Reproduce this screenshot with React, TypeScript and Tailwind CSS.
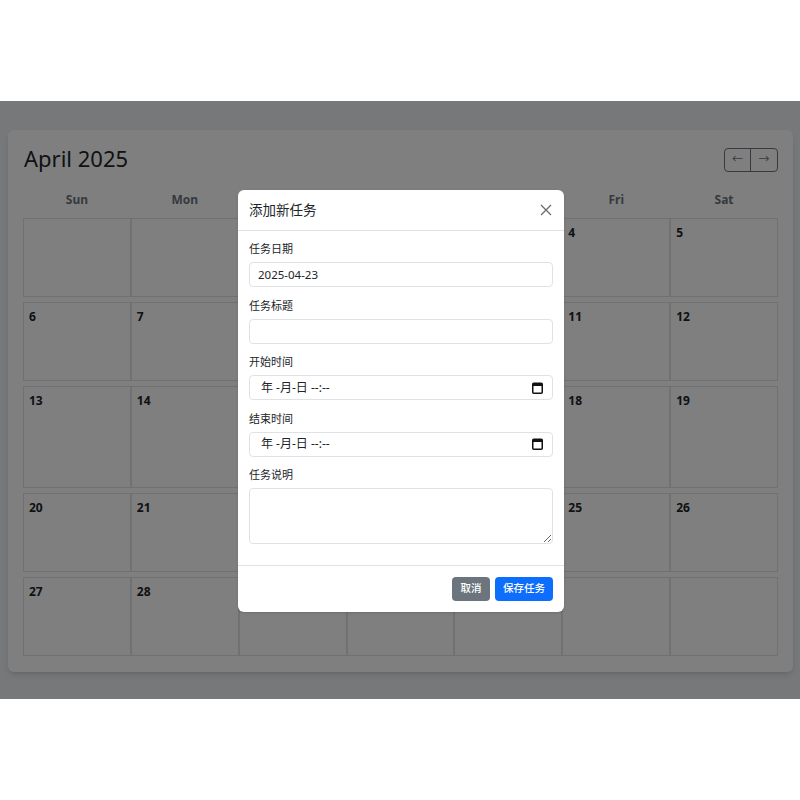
import React from "react";

const FONT = { fontFamily: '"Noto Sans", "Noto Sans CJK SC", sans-serif' };

const weekdays = ["Sun", "Mon", "Tue", "Wed", "Thu", "Fri", "Sat"];

// April 2025 starts on a Tuesday
const cells: (number | null)[] = [
  null, null, 1, 2, 3, 4, 5,
  6, 7, 8, 9, 10, 11, 12,
  13, 14, 15, 16, 17, 18, 19,
  20, 21, 22, 23, 24, 25, 26,
  27, 28, 29, 30, null, null, null,
];

function CalendarIcon() {
  return (
    <svg width="11" height="12" viewBox="0 0 11 12" fill="none">
      <rect x="0.75" y="1.25" width="9.5" height="10" rx="1" stroke="#111" strokeWidth="1.5" />
      <rect x="0.75" y="1.25" width="9.5" height="2.75" fill="#111" />
    </svg>
  );
}

function Field({ label, children }: { label: string; children: React.ReactNode }) {
  return (
    <div className="mb-[10.5px]">
      <div className="h-[16px] mb-[5px] text-[11px] leading-[16px] text-[#212529]">{label}</div>
      {children}
    </div>
  );
}

function DateTimeBox() {
  return (
    <div className="h-[25px] rounded-[4px] border border-[#dee2e6] bg-white flex items-center justify-between pl-[11px] pr-[9px] text-[12px] text-[#212529]">
      <span>年 -月-日 --:--</span>
      <CalendarIcon />
    </div>
  );
}

function TaskModal() {
  return (
    <div className="absolute left-[238px] top-[89px] w-[326px] h-[422px] bg-white rounded-[6px] flex flex-col shadow-sm">
      <div className="h-[41px] border-b border-[#dee2e6] flex items-center justify-between px-[11px]">
        <span className="text-[13.5px] text-[#212529]">添加新任务</span>
        <svg width="12" height="12" viewBox="0 0 12 12" className="mr-[1px]">
          <path d="M1 1 L11 11 M11 1 L1 11" stroke="#6b6b6b" strokeWidth="1.3" />
        </svg>
      </div>
      <div className="flex-1 px-[11px] pt-[10px]">
        <Field label="任务日期">
          <input
            readOnly
            value="2025-04-23"
            className="block w-full h-[25px] rounded-[4px] border border-[#dee2e6] px-[8px] text-[11.5px] text-[#212529] outline-none"
            style={FONT}
          />
        </Field>
        <Field label="任务标题">
          <input
            readOnly
            className="block w-full h-[25px] rounded-[4px] border border-[#dee2e6] px-[8px] text-[12px] outline-none"
            style={FONT}
          />
        </Field>
        <Field label="开始时间">
          <DateTimeBox />
        </Field>
        <Field label="结束时间">
          <DateTimeBox />
        </Field>
        <Field label="任务说明">
          <textarea
            readOnly
            className="block w-full h-[56px] rounded-[4px] border border-[#dee2e6] px-[8px] text-[12px] outline-none"
            style={FONT}
          />
        </Field>
      </div>
      <div className="h-[47px] border-t border-[#dee2e6] flex items-center justify-end gap-[5px] px-[11px]">
        <button className="h-[24px] w-[38px] rounded-[4px] bg-[#6c757d] text-white text-[10.5px] font-medium">取消</button>
        <button className="h-[24px] w-[58px] rounded-[4px] bg-[#0d6efd] text-white text-[10.5px] font-medium">保存任务</button>
      </div>
    </div>
  );
}

export default function App() {
  return (
    <div className="w-[800px] h-[800px] bg-white flex flex-col" style={FONT}>
      <div className="h-[101px]" />
      <div className="relative h-[598px] bg-[#eef0f2] pt-[29px]">
        <div className="ml-[8px] w-[785px] h-[542px] bg-white rounded-[6px] shadow-md px-[15px] pt-[14px]">
          {/* header */}
          <div className="h-[30px] flex items-center justify-between mb-[15px]">
            <h1 className="text-[22px] leading-[28px] mb-[2px] text-[#212529] pl-[1px]">April 2025</h1>
            <div className="flex h-[24px] mt-[1px] border border-[#6c757d] rounded-[4px] text-[#6c757d] text-[11px]">
              <button className="w-[26px] flex items-center justify-center border-r border-[#6c757d]">←</button>
              <button className="w-[26px] flex items-center justify-center">→</button>
            </div>
          </div>

          {/* weekdays */}
          <div className="grid grid-cols-7 h-[20px] mb-[9px]">
            {weekdays.map((d) => (
              <div key={d} className="text-center text-[12px] leading-[22px] font-bold text-[#6c757d]">
                {d}
              </div>
            ))}
          </div>

          {/* days */}
          <div className="grid grid-cols-7 grid-rows-[79px_79px_102px_79px_79px] gap-y-[5px]">
            {cells.map((n, i) => (
              <div key={i} className="border border-[#dee2e6] px-[5px] pt-[6px]">
                {n !== null && (
                  <div className="text-[12px] leading-[16px] font-bold text-[#212529]">{n}</div>
                )}
                {n === 16 && (
                  <div className="mt-[3px] h-[20px] rounded-[3px] bg-[#0d6efd] text-white text-[10px] px-[4px] leading-[20px]">
                    任务
                  </div>
                )}
              </div>
            ))}
          </div>
        </div>

        {/* backdrop */}
        <div className="absolute inset-0 bg-black/50" />
        <TaskModal />
      </div>
    </div>
  );
}
